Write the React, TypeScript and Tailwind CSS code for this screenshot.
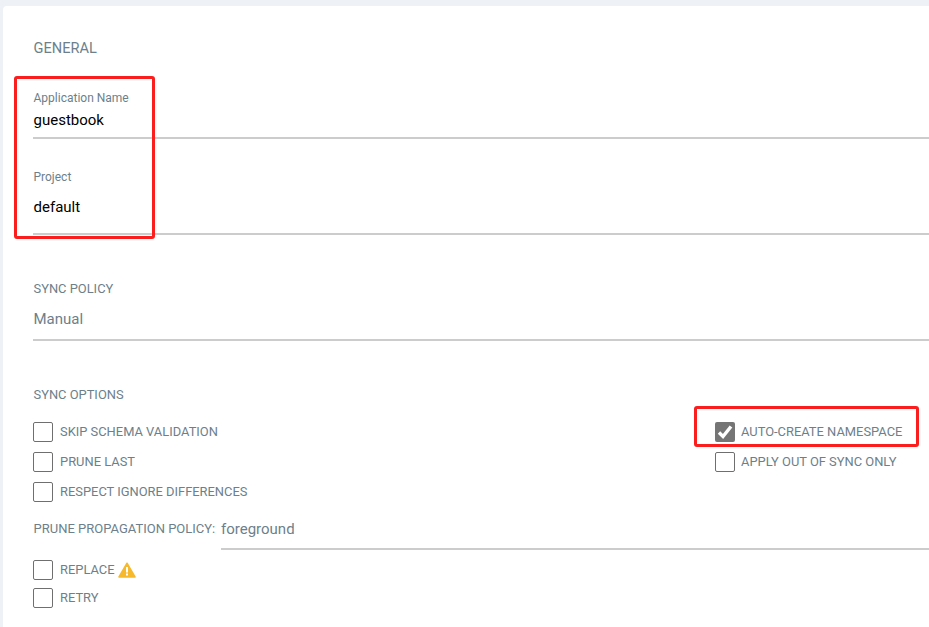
const font = { fontFamily: "Roboto, sans-serif" }

function Box({ checked }: { checked?: boolean }) {
  return checked ? (
    <span className="flex h-5 w-5 shrink-0 items-center justify-center rounded-[2px] bg-[#757575]">
      <svg viewBox="0 0 20 20" className="h-5 w-5">
        <path d="M4 10.5 L8 14.5 L16 4.5" fill="none" stroke="#fff" strokeWidth="3.4" />
      </svg>
    </span>
  ) : (
    <span className="block h-5 w-5 shrink-0 rounded-[2px] border border-[#6f6f6f] bg-white" />
  )
}

function Option({ label, checked, children, tight }: { label: string; checked?: boolean; children?: React.ReactNode; tight?: boolean }) {
  return (
    <div className={`flex items-center text-[12.9px] leading-5 text-[#6d7f8b] ${tight ? "gap-[6px]" : "gap-[7px]"}`}>
      <Box checked={checked} />
      <span>{label}</span>
      {children}
    </div>
  )
}

function Warning() {
  return (
    <svg viewBox="0 0 18 16" className="-ml-[4px] h-[16px] w-[18px]">
      <path d="M9 1.2 L17 15 H1 Z" fill="#f6b92d" stroke="#f6b92d" strokeWidth="1.5" strokeLinejoin="round" />
      <rect x="8" y="5" width="2" height="5.5" fill="#fff" />
      <rect x="8" y="11.5" width="2" height="2" fill="#fff" />
    </svg>
  )
}

export default function App() {
  return (
    <div className="relative h-[627px] w-[929px] overflow-hidden bg-[#eef1f5] pl-[3px] pt-[6px]" style={font}>
      <div className="h-[640px] rounded-l-[4px] bg-white pl-[30px]">
        {/* General */}
        <div className="pt-[33px] pl-[0.5px] text-[14.6px] leading-[18px] text-[#6d7f8b]">GENERAL</div>

        <div className="mt-[33px] pl-[0.5px] text-[12px] leading-[16px] text-[#6d7f8b]">Application Name</div>
        <div className="mt-[4px] h-[29px] border-b-2 border-[#cccccc] pl-[0.5px] text-[15px] leading-[20px] text-[#000]">guestbook</div>

        <div className="mt-[30px] pl-[0.5px] text-[12px] leading-[16px] text-[#6d7f8b]">Project</div>
        <div className="mt-[11px] h-[39px] border-b-2 border-[#cccccc] pl-[0.5px] pt-[1px] text-[15px] leading-[20px] text-[#000]">default</div>

        {/* Sync policy */}
        <div className="mt-[46px] pl-[0.5px] text-[12.9px] leading-[16px] text-[#6d7f8b]">SYNC POLICY</div>
        <div className="mt-[12px] h-[32px] border-b-2 border-[#cccccc] pl-[0.5px] text-[15px] leading-[20px] text-[#6d7f8b]">Manual</div>

        {/* Sync options */}
        <div className="mt-[46px] pl-[0.5px] text-[12.9px] leading-[16px] text-[#6d7f8b]">SYNC OPTIONS</div>

        <div className="mt-[19px] flex">
          <div className="flex w-[682px] flex-col gap-[10px]">
            <Option label="SKIP SCHEMA VALIDATION" />
            <Option label="PRUNE LAST" />
            <Option label="RESPECT IGNORE DIFFERENCES" />
          </div>
          <div className="flex flex-col gap-[10px]">
            <Option label="AUTO-CREATE NAMESPACE" checked tight />
            <Option label="APPLY OUT OF SYNC ONLY" tight />
          </div>
        </div>

        <div className="mt-[17px] flex h-[38px] items-start">
          <span className="w-[188px] pl-[0.5px] pt-[2px] text-[13px] leading-[16px] text-[#6d7f8b]">PRUNE PROPAGATION POLICY:</span>
          <div className="h-[31px] flex-1 border-b-2 border-[#cccccc] text-[15px] leading-[20px] text-[#6d7f8b]">foreground</div>
        </div>

        <div className="mt-[3px] flex flex-col gap-[8px]">
          <Option label="REPLACE">
            <Warning />
          </Option>
          <Option label="RETRY" />
        </div>
      </div>

      {/* Red annotation boxes */}
      <div className="absolute left-[14px] top-[76px] h-[163px] w-[141px] rounded-[3px] border-[3px] border-[#fb1e1e]" />
      <div className="absolute left-[694px] top-[406px] h-[41px] w-[225px] rounded-[3px] border-[3px] border-[#fb1e1e]" />
    </div>
  )
}
